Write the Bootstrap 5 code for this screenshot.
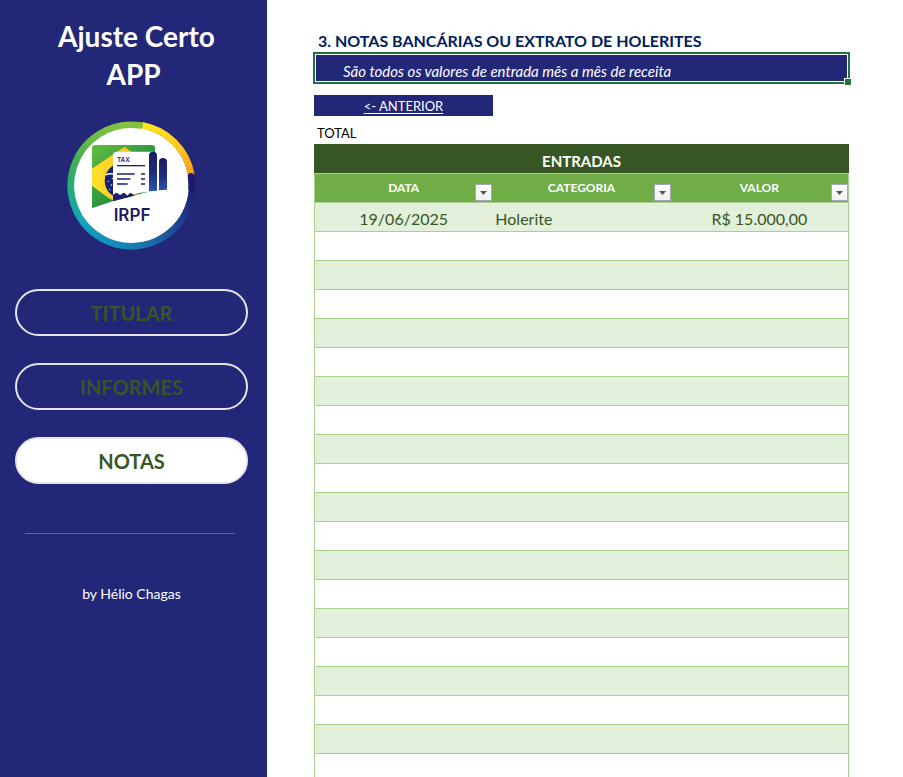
<!DOCTYPE html>
<html lang="pt-BR">
<head>
<meta charset="utf-8">
<meta name="viewport" content="width=device-width, initial-scale=1">
<title>Ajuste Certo APP</title>
<link href="https://cdn.jsdelivr.net/npm/bootstrap@5.3.0/dist/css/bootstrap.min.css" rel="stylesheet">
<style>
  :root { --navy: #232778; --forest: #375623; --leaf: #70ad47; --mint: #e2efda; --line: #a9d08e; --select: #217346; }
  body { font-family: Lato, "Liberation Sans", sans-serif; color: #000; background: #fff; }
  .side-panel { width: 267px; background: var(--navy); padding-top: 17px; }
  .app-title { font-size: 28px; line-height: 38px; font-weight: 700; margin-bottom: 22px; }
  .side-body { padding: 0 19px 0 15px; }
  .app-logo { width: 140px; height: 140px; }
  .side-menu { gap: 27px; margin-top: 34px; }
  .menu-pill { height: 47px; border: 2px solid #e7e6e6; border-radius: 24px; font-size: 20px; font-weight: 700; color: var(--forest); }
  .menu-pill:hover { color: var(--leaf); }
  .menu-pill.active { background: #fff; }
  .side-rule { margin: 49px 13px 0 10px; border-color: #4472c4; opacity: 1; }
  .side-credit { font-size: 14px; line-height: 20px; margin-top: 50px; }
  .sheet { padding: 30px 54px 0 47px; }
  .sheet-title { font-size: 16px; line-height: 22px; font-weight: 700; color: #002060; padding-left: 4px; }
  .selected-cell { margin: 0 -1px; height: 32px; border: 2px solid var(--select); background: var(--navy); box-shadow: inset 0 0 0 1px #fff; padding: 0 28px 1px; font-size: 15px; line-height: 20px; }
  .fill-handle { right: -3px; bottom: -3px; width: 7px; height: 7px; background: var(--select); border: solid #fff; border-width: 1px 0 0 1px; }
  .back-link { width: 179px; height: 21px; margin-top: 11px; padding-top: 2px; background: var(--navy); font-size: 13px; text-underline-offset: 2px; }
  .total-label { font-size: 13px; line-height: 20px; padding: 7px 3px 1px; }
  .entries { table-layout: fixed; border-collapse: separate; border-spacing: 0; }
  .entries th, .entries td { height: 29px; padding: 0 3px; }
  .entries .group-head { background: var(--forest); color: #fff; font-size: 15px; line-height: 20px; padding-top: 5px; }
  .entries .col-head { background: var(--leaf); color: #fff; font-size: 12px; line-height: 18px; height: 30px; border-top: 1px solid var(--line); border-bottom: 1px solid var(--line); }
  .entries td { border-bottom: 1px solid var(--line); font-size: 16px; line-height: 20px; color: var(--forest); padding-top: 4px; }
  .entries tbody tr:nth-child(odd) td { background: var(--mint); }
  .entries tr > .col-head:first-child, .entries td:first-child { border-left: 1px solid var(--line); }
  .entries tr > .col-head:last-child, .entries td:last-child { border-right: 1px solid var(--line); }
  .filter-btn { right: 0; bottom: 1px; width: 17px; height: 17px; border: 1px solid #a6a6b4; background: linear-gradient(#fff, #eef0f6); }
  .filter-btn svg { width: 7px; height: 4px; }
</style>
<script src="https://cdn.jsdelivr.net/npm/bootstrap@5.3.0/dist/js/bootstrap.bundle.min.js"></script>
</head>
<body>
<div class="d-flex vh-100 overflow-hidden">
  <aside class="side-panel flex-shrink-0 text-white text-center">
    <h1 class="app-title">&nbsp;Ajuste Certo<br>APP</h1>
    <div class="side-body">
      <svg class="app-logo d-block mx-auto" viewBox="6 0 420 420" role="img" aria-label="IRPF">
        <defs>
          <linearGradient id="ringLeft" x1="0" y1="0" x2="0" y2="1"><stop offset="0" stop-color="#84c341"/><stop offset=".3" stop-color="#45ae4f"/><stop offset=".6" stop-color="#20ab83"/><stop offset=".85" stop-color="#12a5b8"/><stop offset="1" stop-color="#1590bd"/></linearGradient>
          <linearGradient id="ringRight" gradientUnits="userSpaceOnUse" x1="130" y1="385" x2="394" y2="180"><stop offset="0" stop-color="#1496be"/><stop offset=".4" stop-color="#1a64a5"/><stop offset=".7" stop-color="#203a8c"/><stop offset="1" stop-color="#1d1c68"/></linearGradient>
          <linearGradient id="ringGold" x1="0" y1="0" x2="1" y2="1"><stop offset="0" stop-color="#ffe71a"/><stop offset=".6" stop-color="#ffc81c"/><stop offset="1" stop-color="#f99d1c"/></linearGradient>
          <linearGradient id="flagGreen" x1="0" y1="0" x2="1" y2="1"><stop offset="0" stop-color="#6abf3f"/><stop offset=".5" stop-color="#2f9a3f"/><stop offset="1" stop-color="#08713a"/></linearGradient>
          <linearGradient id="flagGold" x1="0" y1="0" x2="1" y2="0"><stop offset="0" stop-color="#ffe22a"/><stop offset="1" stop-color="#f6a51c"/></linearGradient>
          <linearGradient id="barBlue" x1="0" y1="0" x2="0" y2="1"><stop offset="0" stop-color="#1b1c60"/><stop offset=".55" stop-color="#222c7c"/><stop offset="1" stop-color="#2858b0"/></linearGradient>
          <clipPath id="flagClip"><path d="M96 100Q96 90 106 90H275Q285 90 285 100V225L160 258 96 280Z"/></clipPath>
        </defs>
        <circle cx="213" cy="211" r="174" fill="#fff"/>
        <g fill="none" stroke-width="20">
          <path d="M394 180A182 182 0 0 1 125 370" stroke="url(#ringRight)" stroke-linecap="round"/>
          <path d="M245 31A182 182 0 0 1 394 180" stroke="url(#ringGold)"/>
          <path d="M127 371A182 182 0 0 1 239 31" stroke="url(#ringLeft)" stroke-linecap="round"/>
          <path d="M393 184A182 182 0 0 1 395 220" stroke="#1d1c68" stroke-linecap="round"/>
        </g>
        <g clip-path="url(#flagClip)">
          <path d="M90 85H290V285H90Z" fill="url(#flagGreen)"/>
          <path d="M194 95 300 178 194 270 150 252 96 212V161Z" fill="url(#flagGold)"/>
          <circle cx="187" cy="197" r="53" fill="#18236f"/>
          <path d="M137 180Q155 171 172 184" fill="none" stroke="#fff" stroke-width="4"/>
          <g fill="#fff"><circle cx="145" cy="199" r="2"/><circle cx="154" cy="210" r="2"/><circle cx="149" cy="223" r="2"/><circle cx="157" cy="190" r="2"/></g>
        </g>
        <path d="M159 121Q159 110 171 110H278V229L231 235 222 240 211 234 202 242 192 233 180 241 170 233 159 240Z" fill="#fff"/>
        <path d="M159 240 170 233 180 241 192 233 202 242 211 234 222 240 231 235 222 242 159 259Z" fill="#1b2269"/>
        <g stroke="#1b2269" stroke-width="4"><path d="M171 152H255"/><path d="M171 177H224M171 192H211M171 207H203M243 177H255M243 192H255M243 207H255" stroke-width="5"/></g>
        <text x="171" y="140" font-family="Inter, sans-serif" font-size="19" font-weight="600" fill="#1b2269">TAX</text>
        <path d="M267 121Q267 110 279 110T291 121V227L267 229Z" fill="url(#barBlue)"/>
        <path d="M297 140Q297 129 309 129T321 140V224L297 226Z" fill="url(#barBlue)"/>
        <text x="161" y="318" font-family="Inter, sans-serif" font-size="51" font-weight="600" fill="#1b1c60">IRPF</text>
      </svg>
      <nav class="side-menu d-flex flex-column" aria-label="Menu">
        <a href="#titular" class="menu-pill d-flex align-items-center justify-content-center text-decoration-none">TITULAR</a>
        <a href="#informes" class="menu-pill d-flex align-items-center justify-content-center text-decoration-none">INFORMES</a>
        <a href="#notas" class="menu-pill active d-flex align-items-center justify-content-center text-decoration-none" aria-current="page">NOTAS</a>
      </nav>
      <hr class="side-rule">
      <p class="side-credit mb-0">by Hélio Chagas</p>
    </div>
  </aside>
  <main class="sheet flex-grow-1">
    <h2 class="sheet-title mb-0">3. NOTAS BANCÁRIAS OU EXTRATO DE HOLERITES</h2>
    <div class="selected-cell position-relative d-flex align-items-end text-white fst-italic">São todos os valores de entrada mês a mês de receita<span class="fill-handle position-absolute"></span></div>
    <a href="#anterior" class="back-link d-flex align-items-center justify-content-center text-white">&lt;- ANTERIOR</a>
    <div class="total-label">TOTAL</div>
    <table class="entries w-100">
      <thead>
        <tr><th class="group-head text-center" colspan="3" scope="colgroup">ENTRADAS</th></tr>
        <tr>
          <th class="col-head text-center position-relative" scope="col">DATA<button type="button" class="filter-btn position-absolute p-0 d-flex align-items-center justify-content-center" aria-label="Filtrar data"><svg viewBox="0 0 7 4" aria-hidden="true"><path d="M0 0H7L3.500 4Z" fill="#555"/></svg></button></th>
          <th class="col-head text-center position-relative" scope="col">CATEGORIA<button type="button" class="filter-btn position-absolute p-0 d-flex align-items-center justify-content-center" aria-label="Filtrar categoria"><svg viewBox="0 0 7 4" aria-hidden="true"><path d="M0 0H7L3.500 4Z" fill="#555"/></svg></button></th>
          <th class="col-head text-center position-relative" scope="col">VALOR<button type="button" class="filter-btn position-absolute p-0 d-flex align-items-center justify-content-center" aria-label="Filtrar valor"><svg viewBox="0 0 7 4" aria-hidden="true"><path d="M0 0H7L3.500 4Z" fill="#555"/></svg></button></th>
        </tr>
      </thead>
      <tbody>
        <tr><td class="text-center">19/06/2025</td><td>Holerite</td><td class="text-center">R$ 15.000,00</td></tr>
        <tr><td></td><td></td><td></td></tr>
        <tr><td></td><td></td><td></td></tr>
        <tr><td></td><td></td><td></td></tr>
        <tr><td></td><td></td><td></td></tr>
        <tr><td></td><td></td><td></td></tr>
        <tr><td></td><td></td><td></td></tr>
        <tr><td></td><td></td><td></td></tr>
        <tr><td></td><td></td><td></td></tr>
        <tr><td></td><td></td><td></td></tr>
        <tr><td></td><td></td><td></td></tr>
        <tr><td></td><td></td><td></td></tr>
        <tr><td></td><td></td><td></td></tr>
        <tr><td></td><td></td><td></td></tr>
        <tr><td></td><td></td><td></td></tr>
        <tr><td></td><td></td><td></td></tr>
        <tr><td></td><td></td><td></td></tr>
        <tr><td></td><td></td><td></td></tr>
        <tr><td></td><td></td><td></td></tr>
        <tr><td></td><td></td><td></td></tr>
      </tbody>
    </table>
  </main>
</div>
</body>
</html>
